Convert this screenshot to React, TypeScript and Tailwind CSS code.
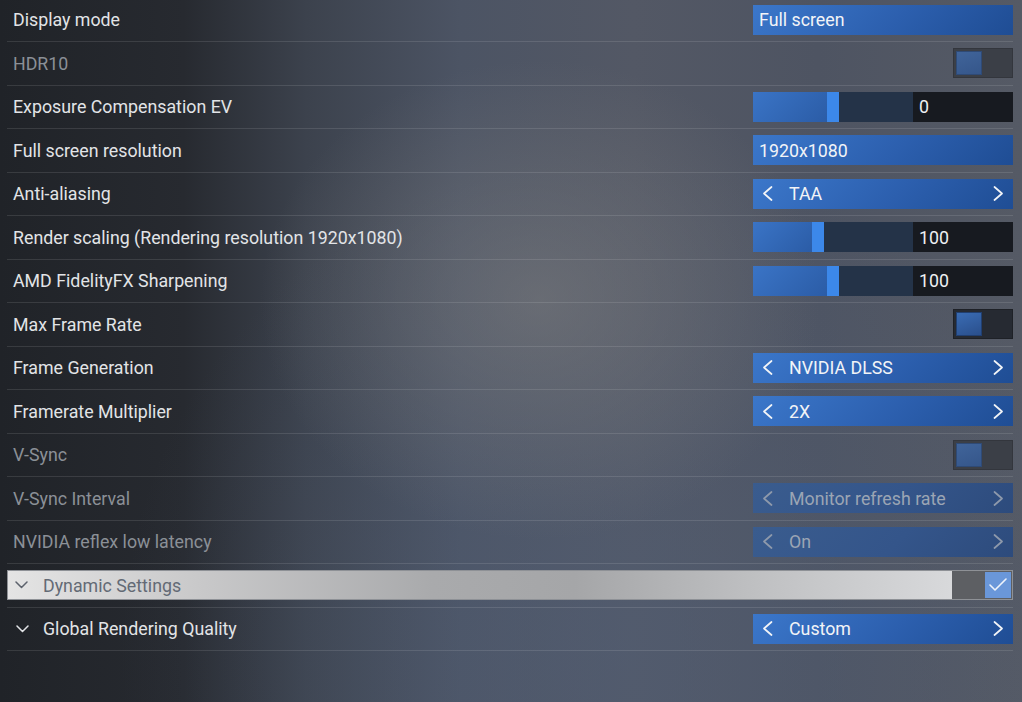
import React from "react";

type Row =
  | { kind: "select"; label: string; value: string; disabled?: boolean }
  | { kind: "arrows"; label: string; value: string; disabled?: boolean }
  | { kind: "toggle"; label: string; disabled?: boolean }
  | { kind: "slider"; label: string; value: string; pos: number };

const rows: Row[] = [
  { kind: "select", label: "Display mode", value: "Full screen" },
  { kind: "toggle", label: "HDR10", disabled: true },
  { kind: "slider", label: "Exposure Compensation EV", value: "0", pos: 0.5 },
  { kind: "select", label: "Full screen resolution", value: "1920x1080" },
  { kind: "arrows", label: "Anti-aliasing", value: "TAA" },
  { kind: "slider", label: "Render scaling (Rendering resolution 1920x1080)", value: "100", pos: 0.4 },
  { kind: "slider", label: "AMD FidelityFX Sharpening", value: "100", pos: 0.5 },
  { kind: "toggle", label: "Max Frame Rate" },
  { kind: "arrows", label: "Frame Generation", value: "NVIDIA DLSS" },
  { kind: "arrows", label: "Framerate Multiplier", value: "2X" },
  { kind: "toggle", label: "V-Sync", disabled: true },
  { kind: "arrows", label: "V-Sync Interval", value: "Monitor refresh rate", disabled: true },
  { kind: "arrows", label: "NVIDIA reflex low latency", value: "On", disabled: true },
];

function Arrow({ dir, color }: { dir: "left" | "right"; color: string }) {
  const pts = dir === "left" ? "9.5,1 2,7.5 9.5,14" : "1.5,1 9,7.5 1.5,14";
  return (
    <svg width="11" height="15" viewBox="0 0 11 15" fill="none">
      <polyline points={pts} stroke={color} strokeWidth="1.7" strokeLinecap="round" strokeLinejoin="round" />
    </svg>
  );
}

function Down({ color }: { color: string }) {
  return (
    <svg width="13" height="8" viewBox="0 0 13 8" fill="none">
      <polyline points="1,1 6.5,6.5 12,1" stroke={color} strokeWidth="1.5" strokeLinecap="round" strokeLinejoin="round" />
    </svg>
  );
}

function Control({ row }: { row: Row }) {
  if (row.kind === "select") {
    return (
      <div className="w-[260px] h-[30px] flex items-center pl-[6px] bg-[linear-gradient(135deg,#3b77ca_0%,#2c5fae_55%,#1f4d94_100%)] text-[#f2f4f7]">
        <span className="pt-[2px]">{row.value}</span>
      </div>
    );
  }
  if (row.kind === "arrows") {
    const dis = row.disabled;
    return (
      <div
        className={
          dis
            ? "w-[260px] h-[30px] flex items-center bg-[linear-gradient(135deg,#3a5c8e_0%,#34558a_55%,#2d4b7c_100%)] text-[#9ba5b4]"
            : "w-[260px] h-[30px] flex items-center bg-[linear-gradient(135deg,#3b77ca_0%,#2c5fae_55%,#1f4d94_100%)] text-[#f2f4f7]"
        }
      >
        <div className="w-[36px] flex pl-[9px]">
          <Arrow dir="left" color={dis ? "#8e99ab" : "#f2f4f7"} />
        </div>
        <div className="flex-1 pt-[2px]">{row.value}</div>
        <div className="w-[36px] flex pl-[16px]">
          <Arrow dir="right" color={dis ? "#8e99ab" : "#f2f4f7"} />
        </div>
      </div>
    );
  }
  if (row.kind === "toggle") {
    const dis = row.disabled;
    return (
      <div
        className={
          dis
            ? "w-[60px] h-[30px] p-[2px] flex bg-[#3b3f47] border border-[#33363d]"
            : "w-[60px] h-[30px] p-[2px] flex bg-[#262a32] border border-[#1e2127]"
        }
      >
        <div
          className={
            dis
              ? "w-[26px] h-full bg-[linear-gradient(160deg,#40649a_0%,#35568a_100%)] border border-[#2f4a75]"
              : "w-[26px] h-full bg-[linear-gradient(160deg,#3a6cb4_0%,#2a4f8c_100%)] border border-[#213f70]"
          }
        />
      </div>
    );
  }
  const trackW = 160;
  const thumbW = 12;
  const left = Math.round(row.pos * (trackW - thumbW));
  return (
    <div className="w-[260px] h-[30px] flex">
      <div className="w-[160px] h-full flex bg-[#243348]">
        <div className="h-full bg-[linear-gradient(135deg,#3a74c6_0%,#2b5ca6_100%)]" style={{ width: left }} />
        <div className="w-[12px] h-full bg-[#3c88ea]" />
      </div>
      <div className="flex-1 h-full bg-[#171a20] flex items-center pl-[6px] pt-[2px] text-[#eef0f3]">{row.value}</div>
    </div>
  );
}

export default function App() {
  return (
    <div
      className="w-[1022px] h-[702px] overflow-hidden text-[17.8px] bg-[radial-gradient(ellipse_280px_240px_at_540px_300px,rgba(125,125,126,0.55),transparent_100%),radial-gradient(ellipse_500px_500px_at_620px_650px,rgba(80,95,120,0.45),transparent_100%),linear-gradient(90deg,#202328_0%,#272a30_18%,#3c424d_30%,#4c5464_45%,#535865_62%,#4e5462_80%,#555a65_100%)]"
      style={{ fontFamily: "Roboto, 'Noto Sans', sans-serif" }}
    >
      <div className="pl-[7px] pr-[9px] mt-[-1.5px] flex flex-col">
        {rows.map((r, i) => (
          <div key={i} className="h-[43.5px] shrink-0 flex items-center justify-between border-b border-[#ffffff1c]">
            <div className={"pl-[6px] pt-[2px] " + (r.disabled ? "text-[#8b9097]" : "text-[#e2e4e7]")}>{r.label}</div>
            <Control row={r} />
          </div>
        ))}
        <div className="h-[43.5px] shrink-0 flex items-center border-b border-[#ffffff1c]">
          <div className="w-full h-[30px] flex border border-[#8e9196]">
            <div className="flex-1 h-full flex items-center bg-[linear-gradient(90deg,#e4e4e4_0%,#c9c9ca_20%,#a9aaac_45%,#a5a6a8_60%,#c0c1c3_80%,#d8d9db_100%)]">
              <div className="w-[35px] flex pl-[7px]">
                <Down color="#5c626c" />
              </div>
              <span className="pt-[2px] text-[#636a75]">Dynamic Settings</span>
            </div>
            <div className="w-[60px] h-full bg-[#5d5f63] flex items-center justify-end pr-[1px]">
              <div className="w-[26px] h-[26px] bg-[#6a97d9] flex items-center justify-center">
                <svg width="18" height="14" viewBox="0 0 18 14" fill="none">
                  <polyline points="1,7 6,12 17,1" stroke="#eef3fb" strokeWidth="1.6" strokeLinecap="round" strokeLinejoin="round" />
                </svg>
              </div>
            </div>
          </div>
        </div>
        <div className="h-[43.5px] shrink-0 flex items-center justify-between border-b border-[#ffffff1c]">
          <div className="flex items-center">
            <div className="w-[36px] flex pl-[9px]">
              <Down color="#e2e4e7" />
            </div>
            <span className="pt-[2px] text-[#e2e4e7]">Global Rendering Quality</span>
          </div>
          <Control row={{ kind: "arrows", label: "", value: "Custom" }} />
        </div>
      </div>
    </div>
  );
}
